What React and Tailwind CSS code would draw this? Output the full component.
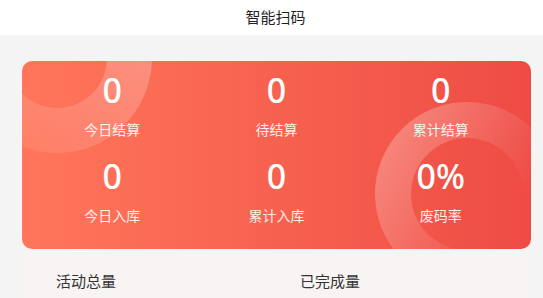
import React from 'react';

const stats = [
    {value: '0', label: '今日结算'},
    {value: '0', label: '待结算'},
    {value: '0', label: '累计结算'},
    {value: '0', label: '今日入库'},
    {value: '0', label: '累计入库'},
    {value: '0%', label: '废码率'},
];

const font = {fontFamily: '"Noto Sans", "Noto Sans CJK SC", sans-serif'};

function Ring({id, outer, inner, from, to, x1, y1, x2, y2, className}) {
    const size = outer * 2;
    return (
        <svg width={size} height={size} viewBox={`0 0 ${size} ${size}`} className={className}>
            <defs>
                <linearGradient id={id} x1={x1} y1={y1} x2={x2} y2={y2}>
                    <stop offset="0" stopColor="#fff" stopOpacity={from}/>
                    <stop offset="1" stopColor="#fff" stopOpacity={to}/>
                </linearGradient>
            </defs>
            <path
                fillRule="evenodd"
                fill={`url(#${id})`}
                d={`M 0 ${outer} a ${outer} ${outer} 0 1 0 ${size} 0 a ${outer} ${outer} 0 1 0 ${-size} 0 Z M ${outer - inner} ${outer} a ${inner} ${inner} 0 1 0 ${inner * 2} 0 a ${inner} ${inner} 0 1 0 ${-inner * 2} 0 Z`}
            />
        </svg>
    );
}

export default function App() {
    return (
        <div className="w-[543px] h-[298px] overflow-hidden bg-[#f4f4f4]" style={font}>
            {/* header */}
            <div className="h-[35px] bg-white flex items-center justify-center pl-[8px]">
                <span className="text-[15px] text-[#1f1f1f] leading-none">智能扫码</span>
            </div>

            <div className="pl-[22px] pr-[12px] pt-[26px]">
                {/* stats card */}
                <div className="relative z-10 h-[188px] rounded-[10px] overflow-hidden bg-gradient-to-r from-[#ff765b] to-[#ee4b44]">
                    <Ring id="ringA" outer={95} inner={50} from={0.32} to={0.04}
                          x1="1" y1="0" x2="0.1" y2="1"
                          className="absolute left-[-60px] top-[-98px]"/>
                    <Ring id="ringB" outer={92} inner={56} from={0.26} to={0}
                          x1="0.05" y1="0.3" x2="0.7" y2="0.7"
                          className="absolute left-[353px] top-[41px]"/>

                    <div className="relative grid grid-cols-3 px-2 pt-[9px] text-white">
                        {stats.map((s, i) => (
                            <div key={i} className={`flex flex-col items-center ${i > 2 ? 'mt-[16px]' : ''}`}>
                                <div className="text-[34px] leading-[40px] font-medium">{s.value}</div>
                                <div className="mt-[10px] text-[14px] leading-[20px] text-white/90">{s.label}</div>
                            </div>
                        ))}
                    </div>
                </div>

                {/* totals */}
                <div className="-mt-[12px] pt-[12px] mr-[2px] bg-[#f7f4f3] h-[80px] flex text-[15px] text-[#333]">
                    <div className="w-[278px] pl-[34px] pt-[21px]">活动总量</div>
                    <div className="pt-[21px]">已完成量</div>
                </div>
            </div>
        </div>
    );
}
